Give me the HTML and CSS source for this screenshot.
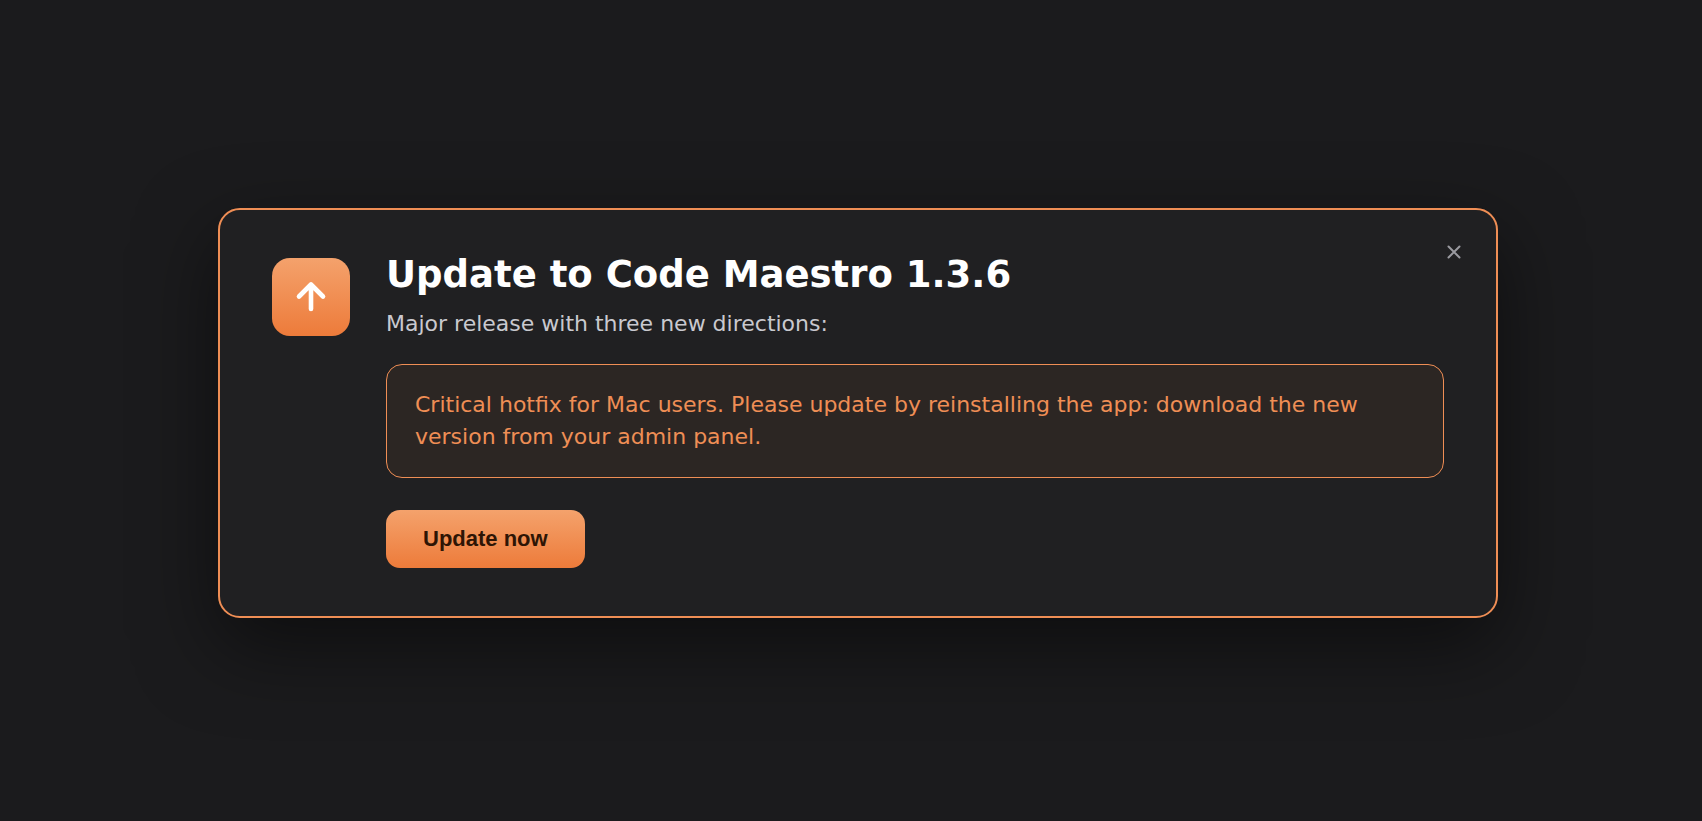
FILE: index.html
```html
<!DOCTYPE html>
<html lang="en">
<head>
    <meta charset="UTF-8">
    <meta name="viewport" content="width=device-width, initial-scale=1.0">
    <title>Update to Code Maestro 1.3.6</title>
    <link rel="stylesheet" href="styles.css">
</head>
<body>
    <main class="page">
        <section class="card" role="dialog" aria-labelledby="title">
            <div class="icon">
                <svg width="40" height="40" viewBox="0 0 40 40" fill="none" stroke="#fff" stroke-width="4.600" stroke-linecap="round" stroke-linejoin="round" aria-hidden="true">
                    <path d="M20 32V7.500M8 19.500L20 7.500L32 19.500"/>
                </svg>
            </div>
            <div class="content">
                <h1 class="title" id="title">Update to Code Maestro 1.3.6</h1>
                <p class="subtitle">Major release with three new directions:</p>
                <p class="notice">Critical hotfix for Mac users. Please update by reinstalling the app: download the new version from your admin panel.</p>
                <button class="update" type="button">Update now</button>
            </div>
            <button class="close" type="button" aria-label="Close">
                <svg width="14" height="14" viewBox="0 0 14 14" fill="none" stroke="currentColor" stroke-width="2" stroke-linecap="round" aria-hidden="true">
                    <path d="M1.500 1.500L12.500 12.500M12.500 1.500L1.500 12.500"/>
                </svg>
            </button>
        </section>
    </main>
</body>
</html>
```
FILE: styles.css
```css
* {
    box-sizing: border-box;
}

body {
    margin: 0;
    background: #1b1b1d;
    font-family: "DejaVu Sans", sans-serif;
}

.page {
    display: flex;
    align-items: center;
    justify-content: center;
    min-height: 100vh;
    padding: 4px 0 0 14px;
}

.card {
    position: relative;
    display: flex;
    align-items: flex-start;
    gap: 36px;
    width: 100%;
    max-width: 1280px;
    padding: 48px 52px;
    border: 2px solid #ef8e55;
    border-radius: 22px;
    background: #202022;
    box-shadow: 0 28px 80px rgba(0, 0, 0, 0.5);
}

.icon {
    display: flex;
    flex: none;
    align-items: center;
    justify-content: center;
    width: 78px;
    height: 78px;
    border-radius: 18px;
    background: linear-gradient(#f4a26c, #ed7b3a);
}

.content {
    flex: 1;
    min-width: 0;
}

.title {
    margin: 0 0 16px;
    color: #fff;
    font-size: 37px;
    line-height: 34px;
}

.subtitle {
    margin: 0 0 24px;
    color: #c9c9cf;
    font-size: 22px;
    line-height: 32px;
}

.notice {
    margin: 0 0 32px;
    padding: 24px 28px;
    border: 1px solid #ef8e55;
    border-radius: 16px;
    background: #2c2623;
    color: #ef8e55;
    font-size: 22px;
    line-height: 32px;
}

.update {
    display: block;
    height: 58px;
    padding: 0 37px;
    border: 0;
    border-radius: 14px;
    background: linear-gradient(#f4a26c, #ed7b3a);
    color: #2e1505;
    font: bold 22px "Liberation Sans", sans-serif;
    cursor: pointer;
}

.close {
    position: absolute;
    top: 24px;
    right: 24px;
    display: flex;
    align-items: center;
    justify-content: center;
    width: 36px;
    height: 36px;
    padding: 0;
    border: 0;
    background: none;
    color: #9a9aa0;
    cursor: pointer;
}
```
